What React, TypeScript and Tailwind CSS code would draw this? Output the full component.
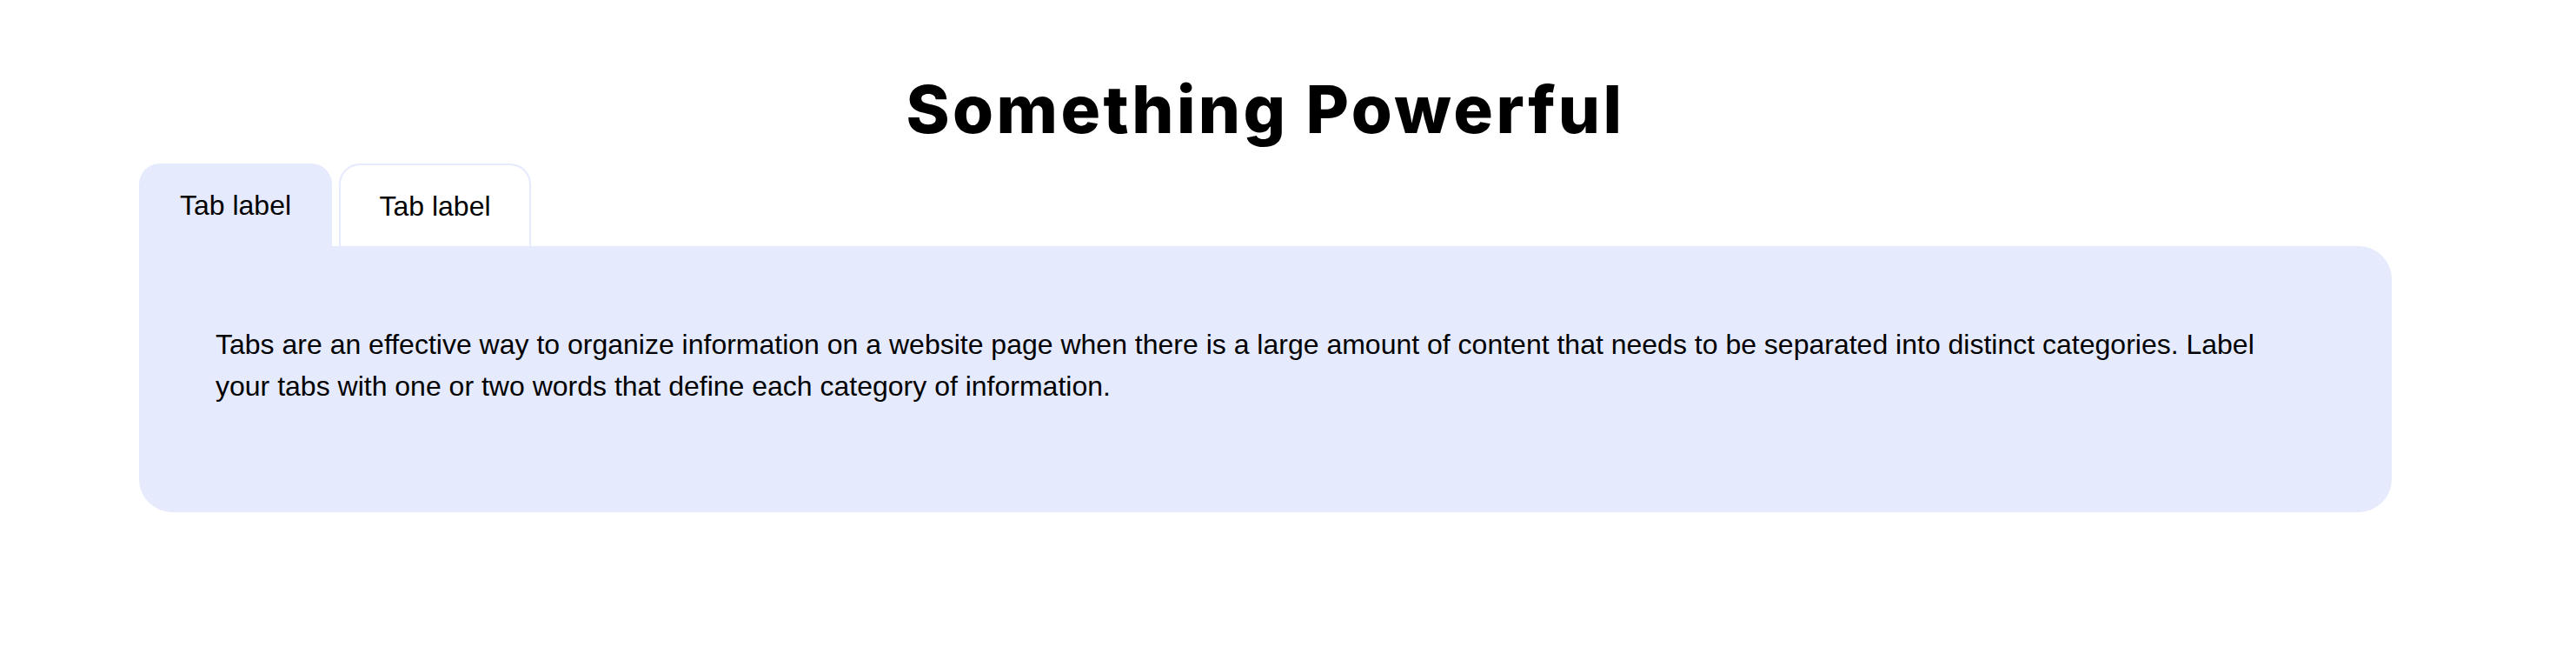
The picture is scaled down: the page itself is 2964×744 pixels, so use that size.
import React from "react";

export default function App() {
  return (
    <div className="w-[2964px] h-[744px] bg-white">
      <div className="ml-[160px] w-[2592px] flex flex-col">
        <h1 className="pt-[87px] text-center text-[76px] leading-[76px] font-extrabold text-black font-['Inter',sans-serif] tracking-[3.4px]">
          Something Powerful
        </h1>
        <div className="mt-[25px] flex gap-[8px] font-['Liberation_Sans',Arial,sans-serif] text-black">
          <div className="h-[95px] w-[222px] flex items-center justify-center rounded-t-[24px] bg-[#e5eafd] text-[32px]">
            Tab label
          </div>
          <div className="h-[95px] w-[221px] flex items-center justify-center rounded-t-[24px] border-2 border-b-0 border-[#e5eafd] bg-white text-[32px]">
            Tab label
          </div>
        </div>
        <div className="h-[306px] bg-[#e5eafd] rounded-b-[38px] rounded-tr-[38px] pl-[88px] pr-[124px] pt-[89px] font-['Liberation_Sans',Arial,sans-serif] text-black">
          <p className="text-[32px] leading-[48px]">
            Tabs are an effective way to organize information on a website page when there is a large amount of content that needs to be separated into distinct categories. Label your tabs with one or two words that define each category of information.
          </p>
        </div>
      </div>
    </div>
  );
}
